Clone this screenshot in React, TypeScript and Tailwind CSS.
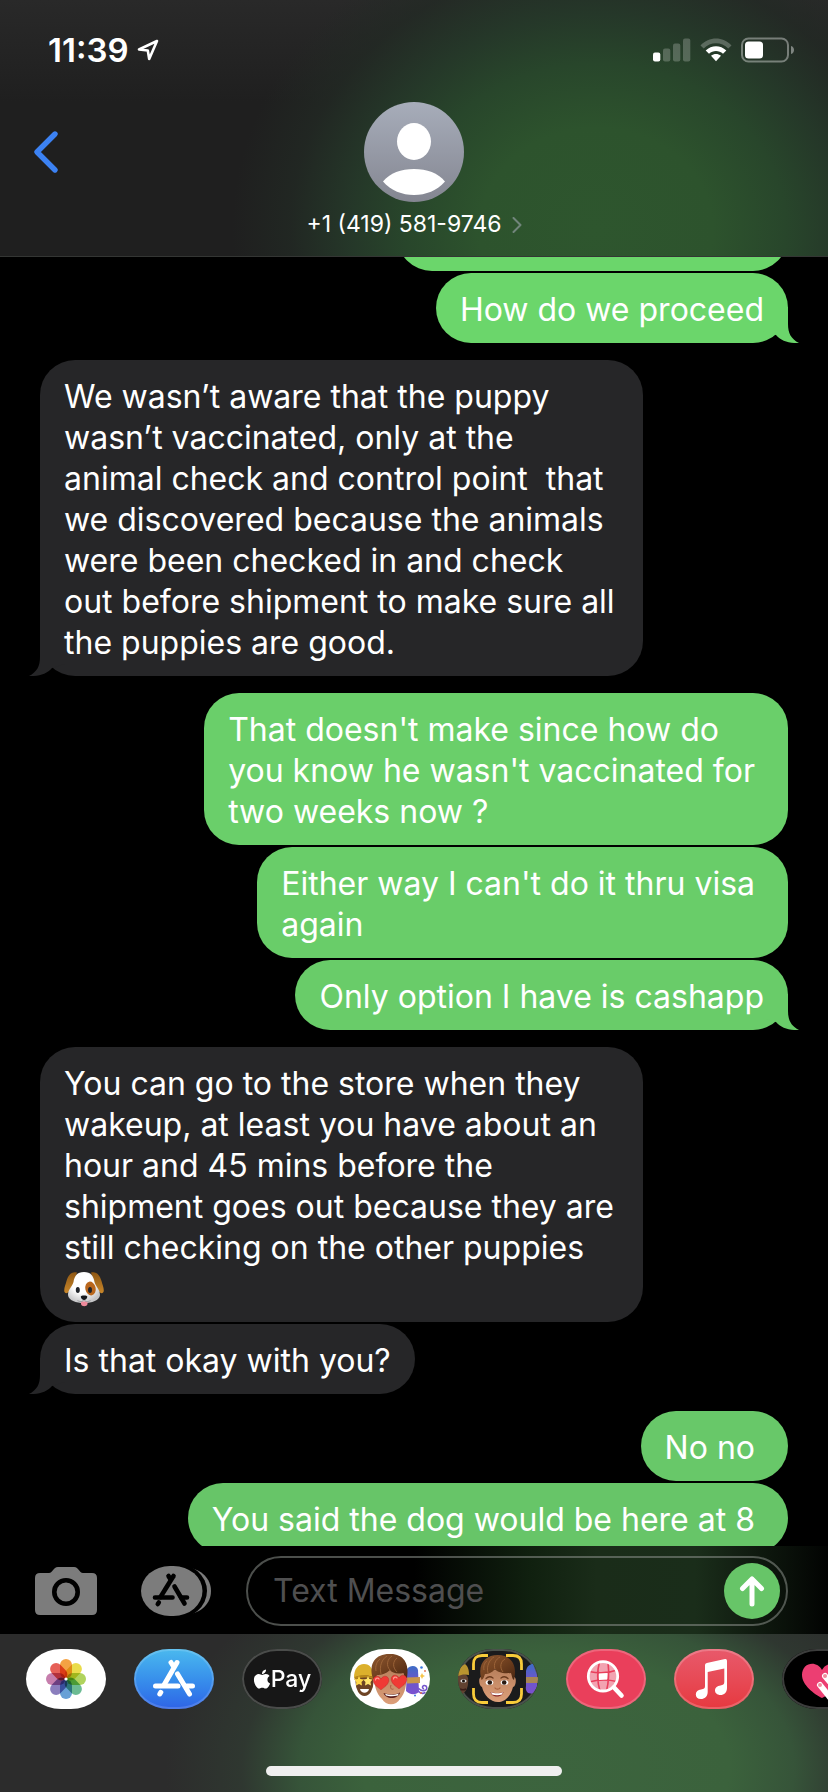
import React from "react";
import { FaApple } from "react-icons/fa";

type Message = {
  side: "in" | "out";
  text: string;
  tone?: string;
  tail?: boolean;
  dog?: boolean;
  wide?: boolean;
};

const groups: Message[][] = [
  [
    { side: "out", text: "", tone: "text-[#6bd66b]" },
    { side: "out", text: "How do we proceed", tone: "text-[#6bd66b]", tail: true },
  ],
  [
    {
      side: "in",
      text: "We wasn’t aware that the puppy\nwasn’t vaccinated, only at the\nanimal check and control point  that\nwe discovered because the animals\nwere been checked in and check\nout before shipment to make sure all\nthe puppies are good.",
      tail: true,
      wide: true,
    },
  ],
  [
    {
      side: "out",
      text: "That doesn't make since how do\nyou know he wasn't vaccinated for\u00a0\ntwo weeks now ?",
      tone: "text-[#6acf6a]",
    },
    { side: "out", text: "Either way I can't do it thru visa\u00a0\nagain", tone: "text-[#69cd69]" },
    { side: "out", text: "Only option I have is cashapp", tone: "text-[#69cc69]", tail: true },
  ],
  [
    {
      side: "in",
      text: "You can go to the store when they\nwakeup, at least you have about an\nhour and 45 mins before the\nshipment goes out because they are\nstill checking on the other puppies\n",
      dog: true,
      wide: true,
    },
    { side: "in", text: "Is that okay with you?", tail: true },
  ],
  [
    { side: "out", text: "No no\u00a0", tone: "text-[#68c869]" },
    { side: "out", text: "You said the dog would be here at 8\u00a0", tone: "text-[#67c568]" },
  ],
];

function DogFace() {
  return (
    <svg role="img" aria-label="dog face" viewBox="0 0 40 36" className="block h-9 w-10">
      <defs>
        <radialGradient id="dogHead" cx="0.45" cy="0.35" r="0.65">
          <stop offset="0.5" stopColor="#ffffff" />
          <stop offset="1" stopColor="#c4c4c6" />
        </radialGradient>
        <linearGradient id="dogEar" x2="0" y2="1">
          <stop stopColor="#8e5714" />
          <stop offset="1" stopColor="#c9872a" />
        </linearGradient>
      </defs>
      <path d="M13 1.500C7 0 4 5 2.500 10C1.500 14 -0.500 18 0.500 21C2 24 7 21 10 12Z" fill="url(#dogEar)" />
      <path d="M27 1.500C33 0 36 5 37.500 10C38.500 14 40.500 18 39.500 21C38 24 33 21 30 12Z" fill="url(#dogEar)" />
      <path
        d="M20 1C13 1 10.500 5 9.500 11C8.500 15.500 4 18 4 24C4.500 29.500 12 32 20 32C28 32 35.500 29.500 36 24C36 18 31.500 15.500 30.500 11C29.500 5 27 1 20 1Z"
        fill="url(#dogHead)"
      />
      <ellipse cx="26.500" cy="17.500" rx="5.200" ry="7" transform="rotate(-12 26.500 17.500)" fill="#b9671d" />
      <ellipse cx="13.800" cy="19" rx="2" ry="3" fill="#20242b" />
      <ellipse cx="26" cy="19" rx="2" ry="3" fill="#20242b" />
      <path d="M17 30.500H23.500V33C23 36 17.500 36 17 33Z" fill="#ee8a9b" />
      <path d="M13.500 29.500C17 31.500 19 30.500 20 28.500C21 30.500 23 31.500 26.500 29.500" fill="none" stroke="#9a9a9d" strokeWidth="1" />
      <path d="M16.800 25.500C16.800 24 23.300 24 23.300 25.500C23.300 27.500 21.500 29 20.100 29C18.700 29 16.800 27.500 16.800 25.500Z" fill="#15181c" />
    </svg>
  );
}

function Tail({ side }: { side: "in" | "out" }) {
  return (
    <svg
      aria-hidden="true"
      viewBox="0 0 36 36"
      className={
        side === "out"
          ? "absolute -right-[11px] bottom-0 h-9 w-9"
          : "absolute -left-[11px] bottom-0 h-9 w-9 -scale-x-100"
      }
    >
      <path d="M0 0H25V17C25 26 28 32 36 36C26 36.500 18 34 13 28L0 24Z" fill="currentColor" />
    </svg>
  );
}

function Bubble({ message }: { message: Message }) {
  const out = message.side === "out";
  return (
    <li
      className={
        out
          ? `relative self-end rounded-[35px] bg-current ${message.tone} ${message.text ? "" : "w-[391px]"}`
          : `relative self-start rounded-[35px] bg-current text-[#262628] ${message.wide ? "min-w-[603px]" : ""}`
      }
    >
      {message.tail && <Tail side={message.side} />}
      <div className="relative min-h-[70px] whitespace-pre-wrap px-6 pt-4 pb-[13px] text-[32px] leading-[41px] text-white">
        {message.text}
        {message.dog && (
          <div className="flex h-[41px] items-center">
            <DogFace />
          </div>
        )}
      </div>
    </li>
  );
}

function StatusBar() {
  return (
    <div className="flex h-[100px] items-center justify-between pr-[33px] pl-12">
      <div className="flex items-center gap-2 text-white">
        <span className="text-[33px] leading-10 font-semibold">11:39</span>
        <svg viewBox="0 0 22 22" className="h-[22px] w-[22px]" fill="none" stroke="#fff" strokeWidth="2.600" strokeLinejoin="round" aria-label="Location">
          <path d="M20 2L2 10.500L10.800 11.500L12.200 20Z" />
        </svg>
      </div>
      <div className="flex items-center gap-[9px]">
        <svg viewBox="0 0 38 24" className="h-6 w-[38px]" aria-label="Signal">
          <rect x="0" y="14.500" width="7.300" height="9" rx="2" fill="#fff" />
          <g fill="#fff" opacity="0.22">
            <rect x="10" y="10.500" width="7.300" height="13" rx="2" />
            <rect x="20" y="5.500" width="7.300" height="18" rx="2" />
            <rect x="30" y="0.500" width="7.300" height="23" rx="2" />
          </g>
        </svg>
        <svg viewBox="0 0 32 24" className="h-6 w-8" aria-label="Wi-Fi">
          <path d="M0.500 7.500C9 -1.800 23 -1.800 31.500 7.500L28.300 10.500C21.500 3.500 10.500 3.500 3.700 10.500Z" fill="#fff" opacity="0.25" />
          <path d="M5.700 12.500C11.500 6.800 20.500 6.800 26.300 12.500L23 15.800C19 12 13 12 9 15.800Z" fill="#fff" />
          <path d="M11 17.800C14 15.300 18 15.300 21 17.800L16 23.200Z" fill="#fff" />
        </svg>
        <svg viewBox="0 0 54 26" className="h-[26px] w-[54px]" aria-label="Battery">
          <rect x="1" y="1.500" width="46" height="23" rx="6.500" fill="none" stroke="#fff" strokeWidth="2" opacity="0.38" />
          <rect x="4" y="4.500" width="18" height="17" rx="3.500" fill="#fff" />
          <path d="M50 9C54 10 54 16 50 17Z" fill="#fff" opacity="0.42" />
        </svg>
      </div>
    </div>
  );
}

function Header() {
  return (
    <header className="relative z-10 h-[257px] shrink-0 border-b border-[#343634] bg-[#1f1f1f] bg-[radial-gradient(ellipse_44%_125%_at_72%_90%,#2e562e_0%,#2d532d_32%,#28462b_52%,rgba(37,56,41,0.95)_68%,rgba(34,42,36,0.7)_84%,rgba(32,32,32,0)_100%),linear-gradient(#292929,#1f1f1f_40%)]">
      <StatusBar />
      <div className="grid grid-cols-[1fr_auto_1fr] items-start px-[32px] pt-[2px]">
        <button type="button" aria-label="Back" className="mt-7 w-7">
          <svg viewBox="0 0 28 44" className="h-11 w-7" fill="none" stroke="#3c82f3" strokeWidth="5.400" strokeLinecap="round" strokeLinejoin="round">
            <path d="M23 4L5 22L23 40" />
          </svg>
        </button>
        <button type="button" className="flex flex-col items-center gap-2 text-white">
          <svg viewBox="0 0 100 100" className="h-[100px] w-[100px]" aria-hidden="true">
            <defs>
              <linearGradient id="avatar" x2="0" y2="1">
                <stop stopColor="#a7adba" />
                <stop offset="1" stopColor="#848691" />
              </linearGradient>
            </defs>
            <circle cx="50" cy="50" r="50" fill="url(#avatar)" />
            <ellipse cx="50" cy="39.500" rx="17" ry="18.500" fill="#fff" />
            <path d="M19 79.500C26 71 37 67 50 67C63 67 74 71 81 79.500C73 88.500 62 93 50 93C38 93 27 88.500 19 79.500Z" fill="#fff" />
          </svg>
          <span className="flex items-center gap-[10px] text-[23px] leading-7">
            +1 (419) 581-9746
            <svg viewBox="0 0 10 16" className="mt-[2px] h-4 w-[10px]" fill="none" stroke="#71857b" strokeWidth="2" strokeLinecap="round" strokeLinejoin="round">
              <path d="M1.500 1L8.500 8L1.500 15" />
            </svg>
          </span>
        </button>
      </div>
    </header>
  );
}

function Composer() {
  return (
    <form
      onSubmit={(event) => event.preventDefault()}
      className="relative z-10 flex h-[88px] shrink-0 items-center bg-black bg-[linear-gradient(90deg,transparent_50%,#10200f_64%,#1a2c19_72%,#1a2d1a_84%,#0b130b_94%,#020302_100%)] pt-px pr-10 pl-[35px]"
    >
      <button type="button" aria-label="Camera" className="shrink-0">
        <svg viewBox="0 0 62 48" className="h-12 w-[62px]">
          <path
            fill="#7c7c7c"
            d="M5 6H14C18 6 18 0 23 0H39C44 0 44 6 48 6H57Q62 6 62 11V43Q62 48 57 48H5Q0 48 0 43V11Q0 6 5 6Z"
          />
          <circle cx="31" cy="25" r="11.700" fill="none" stroke="#000" strokeWidth="4.600" />
        </svg>
      </button>
      <button type="button" aria-label="Apps" className="ml-11 shrink-0">
        <svg viewBox="0 0 70 50" className="h-[50px] w-[70px]">
          <path d="M45 1C61 3 70 13 70 25C70 37 61 47 45 49Z" fill="#7c7c7c" />
          <rect x="-5" y="-3" width="71" height="56" rx="32" ry="28" fill="#000" />
          <rect x="0" y="0" width="61.500" height="50" rx="29" ry="25" fill="#7c7c7c" />
          <g stroke="#000" strokeWidth="4.600" strokeLinecap="round" fill="none">
            <path d="M32.500 10L19.500 31" />
            <path d="M27.500 10L29 12.500M33.500 20.500L43.500 37.500" />
            <path d="M14 31.500H31.500M40 31.500H46" />
            <path d="M17.800 36.500L16.800 38" />
          </g>
        </svg>
      </button>
      <div className="relative ml-[35px] h-[70px] min-w-0 flex-1">
        <input
          aria-label="Text Message"
          placeholder="Text Message"
          className="h-full w-full rounded-full border-2 border-[#8a8f8a]/55 bg-transparent pr-20 pl-[25px] text-[32px] text-white outline-none placeholder:text-[#4f4f50] placeholder:opacity-100"
        />
        <button type="submit" aria-label="Send" className="absolute top-[7px] right-2 h-14 w-14 rounded-full bg-[#67c568]">
          <svg viewBox="0 0 56 56" className="h-14 w-14" fill="none" stroke="#fff" strokeWidth="5" strokeLinecap="round" strokeLinejoin="round">
            <path d="M28 41V16M18.500 25.500L28 16L37.500 25.500" />
          </svg>
        </button>
      </div>
    </form>
  );
}

const petals = ["#f39a33", "#e9d93b", "#a9cf4f", "#5fb58a", "#5b98d3", "#8173b8", "#c173a6", "#e4524a"];

function PhotosIcon() {
  return (
    <svg viewBox="0 0 80 60" className="h-full w-full">
      {petals.map((color, i) => (
        <rect
          key={color}
          x="34"
          y="10"
          width="12"
          height="19.500"
          rx="6"
          fill={color}
          opacity="0.92"
          transform={`rotate(${i * 45} 40 30)`}
          className="mix-blend-multiply"
        />
      ))}
      <circle cx="40" cy="30" r="1.600" fill="#fff" />
    </svg>
  );
}

function StoreIcon() {
  return (
    <svg viewBox="0 0 80 60" className="h-full w-full" fill="none" stroke="#fff" strokeWidth="5" strokeLinecap="round">
      <path d="M43 13.500L30 36" />
      <path d="M37 13.500L39.500 17.500M43.500 25L55.500 45" />
      <path d="M21.500 37H44M53 37H58.500" />
      <path d="M26.800 43.300L25.800 45" />
    </svg>
  );
}

function HeartShape({ x, y, s }: { x: number; y: number; s: number }) {
  return (
    <path
      transform={`translate(${x} ${y}) scale(${s})`}
      d="M0 7C-3 4.500 -8 1.500 -8 -3C-8 -7.500 -2 -8.500 0 -4C2 -8.500 8 -7.500 8 -3C8 1.500 3 4.500 0 7Z"
    />
  );
}

function MemojiDefs() {
  return (
    <svg className="absolute h-0 w-0" aria-hidden="true">
      <defs>
        <linearGradient id="skin" x2="0" y2="1">
          <stop stopColor="#b9805c" />
          <stop offset="1" stopColor="#dd9f7a" />
        </linearGradient>
        <linearGradient id="hair" x2="1" y2="1">
          <stop stopColor="#8d5730" />
          <stop offset="0.5" stopColor="#70401f" />
          <stop offset="1" stopColor="#4a2611" />
        </linearGradient>
        <linearGradient id="purple" x2="0" y2="1">
          <stop stopColor="#3d6cc6" />
          <stop offset="0.45" stopColor="#6759c9" />
          <stop offset="1" stopColor="#7b50d0" />
        </linearGradient>
      </defs>
    </svg>
  );
}

function StickersIcon() {
  return (
    <svg viewBox="0 0 80 60" className="h-full w-full">
      <ellipse cx="14.500" cy="33" rx="9" ry="14" fill="#6d4324" />
      <path d="M4 29C4 20 8 15 14 15C20 15 23 19 23 28C17 26 10 26 4 29Z" fill="#dcb02c" />
      <path d="M4.500 28C10 25.500 17 25.500 23 28V30C17 28 10 28 4.500 31Z" fill="#b88819" />
      <path d="M9 27L10.400 30L14 30.500L11.500 33L12 36.500L9 35L6 36.500L6.300 33L4.500 30.500L7.600 30Z" fill="#ffd84a" />
      <path d="M18 27L19.400 30L22.500 30.500L20.500 33L21 36.500L18 35L15 36.500L15.500 33L13.200 30.500L16.600 30Z" fill="#ffe36a" />
      <path d="M10 40H19C18 45 11 45 10 40Z" fill="#fff" />
      <path d="M57 20C60 16 67 16 68 21L69 43C64 47 59 45 56 42Z" fill="url(#purple)" />
      <path d="M57 28.500L70 28V34L57 34.500Z" fill="#c9964a" />
      <path d="M68 39C73 44 79 41 76 37C73 35 71 39 74 40M68 42C72 46 75 44 75 43" fill="none" stroke="#7657cd" strokeWidth="1.600" />
      <circle cx="71.500" cy="18.500" r="1.300" fill="#3978df" />
      <circle cx="75" cy="22" r="0.900" fill="#e36c4b" />
      <path d="M72 24L73 26L75 27L73 28L72 30L71 28L70 27L71 26Z" fill="#f7c448" />
      <circle cx="71" cy="44" r="1" fill="#e36c4b" />
      <circle cx="65" cy="46.500" r="1" fill="#3978df" />
      <path d="M24 26C26 17 54 17 56 26C57 36 55 44 50 50C46 57 36 57 32 50C26 44 24 36 24 26Z" fill="url(#skin)" />
      <path d="M23 30C18 14 26 5 39 5C52 4 60 13 57 29C55 29.500 54.500 27 53.500 24C47 25.500 42 24 40 21C36 25 31 26 27 26C26 28 25 30 23 30Z" fill="url(#hair)" />
      <path d="M40 21C36 17 37 10 42 7M47 23C42 18 43 12 47 9M31 25C29 17 32 10 37 7M26 22C25 17 27 12 30 10" fill="none" stroke="#a56b3e" strokeWidth="1" opacity="0.800" />
      <path d="M33.500 44C38 46 46 46 50 43.500C49 50 36 51.500 33.500 44Z" fill="#5b1f1d" />
      <path d="M35 44.800C39 46.200 45 46 48.700 44.500L48 46.500C44 47.500 39 47.500 36 46.500Z" fill="#fff" />
      <path d="M41 36C40 39 41 41 43.500 40" fill="none" stroke="#a65f42" strokeWidth="1" />
      <g fill="#f03a35" stroke="#b61c22" strokeWidth="0.400">
        <HeartShape x={31} y={34} s={0.98} />
        <HeartShape x={49} y={33} s={0.98} />
      </g>
      <path d="M25.500 31C25.500 29 28 28.500 29 30M43.500 30C43.500 28 46 27.500 47 29" stroke="#ff9b91" strokeWidth="1.200" fill="none" strokeLinecap="round" />
    </svg>
  );
}

function MemojiIcon() {
  return (
    <svg viewBox="0 0 80 60" className="h-full w-full">
      <path d="M-1 25C4 23 9 25 10 29C11 38 8 44 2 46Z" fill="#614231" />
      <path d="M-1 27C1 19 4 17 7 15C11 18 11 23 11 26C7 25 3 25 -1 28Z" fill="#b9942f" />
      <ellipse cx="5.500" cy="32" rx="3" ry="1.700" fill="#ddd" />
      <circle cx="5.500" cy="32" r="1.500" fill="#1b120e" />
      <path d="M2 40C4 41 6 41 8 40" stroke="#3a1d18" strokeWidth="1.500" />
      <path d="M68 22C69 17 72 15 75 15L79 26V38L75 44C70 46 67 42 68 37Z" fill="url(#purple)" />
      <path d="M68 28H80V34H68Z" fill="#a88654" />
      <path d="M23 28C25 18 54 18 56 28C59 28 58 38 55 38C53 46 48 53 40 53C32 53 26 46 24 38C21 37 20 29 23 28Z" fill="url(#skin)" />
      <path d="M23.500 31C19 15 27 6 40 6C52 6 60 15 56 31C54 30 54 27 53 24C45 25 39 23 37 20C34 24 30 25 27 25C26 28 25.500 30 23.500 31Z" fill="url(#hair)" />
      <path d="M37 20C35 15 38 10 42 8M45 23C41 18 43 12 47 10M30 24C28 17 32 10 36 8M26 21C25 17 27 13 29 12" fill="none" stroke="#a56b3e" strokeWidth="1" opacity="0.800" />
      <path d="M28 29.500C30 27.500 33 27.500 35 29M43 29C45 27.500 48 27.500 50 29.500" stroke="#6a3a1d" strokeWidth="1.300" fill="none" strokeLinecap="round" />
      <ellipse cx="31.500" cy="33.500" rx="3.800" ry="2.500" fill="#fff" />
      <ellipse cx="46.500" cy="33.500" rx="3.800" ry="2.500" fill="#fff" />
      <circle cx="31.800" cy="33.500" r="2.300" fill="#2b1a12" />
      <circle cx="46.200" cy="33.500" r="2.300" fill="#2b1a12" />
      <path d="M37 39C38 40.500 41 40.500 42 39" stroke="#a8623f" strokeWidth="1.200" fill="none" strokeLinecap="round" />
      <path d="M32.500 43C36 44.500 42 44.500 45.500 43C44.500 49 33.500 49 32.500 43Z" fill="#8a2a2a" />
      <path d="M33 43.200C36 44.600 42 44.600 45 43.200L44 45.600C41 46.600 37 46.600 34 45.600Z" fill="#fff" />
      <path
        d="M15.500 21V15Q15.500 6.500 24 6.500H30M48 6.500H55Q63.500 6.500 63.500 15V21M63.500 39V45Q63.500 53.500 55 53.500H48M30 53.500H24Q15.500 53.500 15.500 45V39"
        fill="none"
        stroke="#f8cb3a"
        strokeWidth="2.800"
      />
    </svg>
  );
}

function ImagesIcon() {
  return (
    <svg viewBox="0 0 80 60" className="h-full w-full" fill="none">
      <circle cx="37" cy="27.300" r="14.500" fill="#f2a3b1" />
      <g stroke="#e93f5c" strokeWidth="1.600">
        <path d="M33.500 13C31 22 31 32 34 42M42 13.500C43 22 43 32 40.500 42M23 22.500C32 24.500 42 24.500 51 21M23 33C32 30.500 42 30.500 51 32.500" />
      </g>
      <path d="M33 24.500L41.500 24L41 30.500L33 31Z" fill="#fff" />
      <circle cx="37" cy="27.300" r="14.700" stroke="#fff" strokeWidth="2.800" />
      <path d="M48 38.500L55.500 46.500" stroke="#fff" strokeWidth="4.600" strokeLinecap="round" />
    </svg>
  );
}

function MusicIcon() {
  return (
    <svg viewBox="0 0 80 60" className="h-full w-full" fill="#fff">
      <path d="M31 16Q31 14.300 32.800 13.900L51 10.100Q53 9.700 53 11.800V39C53 43.500 50 46 46.500 46C43 46 41 43.800 41 41.500C41 38.500 43.500 37 46.500 36.500C49 36 50.300 35.500 50.300 33V19.500L33.700 23V43C33.700 47.500 30.500 50 27 50C23.500 50 21.800 48 21.800 45.500C21.800 42.500 24 41 27 40.500C30 40 31 39.300 31 37Z" />
    </svg>
  );
}

function TouchIcon() {
  return (
    <svg viewBox="0 0 80 60" className="h-full w-full">
      <path d="M40 49C32 45 20 36 20 26C20 13 35 11 40 21C45 11 60 13 60 26C60 36 48 45 40 49Z" fill="#ec3e72" />
      <g stroke="#fff" strokeWidth="6" strokeLinecap="round">
        <path d="M38 36L50 51" />
        <path d="M43 27L57 44" />
      </g>
      <circle cx="38" cy="36" r="2" fill="#f08c9e" />
      <circle cx="43" cy="27" r="2" fill="#f08c9e" />
    </svg>
  );
}

const pill = "h-[60px] w-20 shrink-0 overflow-hidden rounded-[35px/30px]";

function AppDrawer() {
  return (
    <footer className="relative z-10 flex h-[158px] shrink-0 flex-col justify-between overflow-hidden bg-[#2c2c2c] bg-[radial-gradient(ellipse_46%_150%_at_66%_85%,#3c643e_0%,#3b623c_48%,#365439_65%,rgba(48,60,50,0.7)_80%,rgba(44,44,44,0)_100%)] pt-[15px] pb-4">
      <MemojiDefs />
      <nav aria-label="Message apps" className="flex gap-7 overflow-hidden pl-[26px]">
        <button type="button" aria-label="Photos" className={`${pill} bg-white`}>
          <PhotosIcon />
        </button>
        <button type="button" aria-label="App Store" className={`${pill} bg-linear-to-b from-[#4bb9ee] to-[#2f63e6] inset-ring-2 inset-ring-white/15`}>
          <StoreIcon />
        </button>
        <button
          type="button"
          className={`${pill} flex items-center justify-center bg-[#171717] text-[23px] font-medium text-white inset-ring-2 inset-ring-[#4a4c4a]`}
        >
          <FaApple className="h-[22px] w-[18px]" aria-hidden="true" />
          <span>Pay</span>
        </button>
        <button type="button" aria-label="Memoji stickers" className={`${pill} bg-white`}>
          <StickersIcon />
        </button>
        <button type="button" aria-label="Memoji" className={`${pill} bg-[#1b1b1c] inset-ring-2 inset-ring-[#4a524b]`}>
          <MemojiIcon />
        </button>
        <button type="button" aria-label="Images" className={`${pill} bg-[#ea3f5b] inset-ring-2 inset-ring-white/20`}>
          <ImagesIcon />
        </button>
        <button type="button" aria-label="Music" className={`${pill} bg-linear-to-b from-[#e8596b] to-[#e6383f] inset-ring-2 inset-ring-white/20`}>
          <MusicIcon />
        </button>
        <button type="button" aria-label="Digital Touch" className={`${pill} bg-black inset-ring-2 inset-ring-[#3c3d3c]`}>
          <TouchIcon />
        </button>
      </nav>
      <div className="h-[10px] w-[296px] self-center rounded-full bg-[#efefef]" />
    </footer>
  );
}

export default function App() {
  return (
    <div className="flex h-screen flex-col overflow-hidden bg-black font-[Inter,'Liberation_Sans',sans-serif]">
      <Header />
      <main className="min-h-0 flex-1 overflow-hidden">
        <div className="-mt-14 flex flex-col gap-[17px] px-10">
          {groups.map((group, g) => (
            <ul key={g} className="flex flex-col gap-[2px]">
              {group.map((message, m) => (
                <Bubble key={m} message={message} />
              ))}
            </ul>
          ))}
        </div>
      </main>
      <Composer />
      <AppDrawer />
    </div>
  );
}
